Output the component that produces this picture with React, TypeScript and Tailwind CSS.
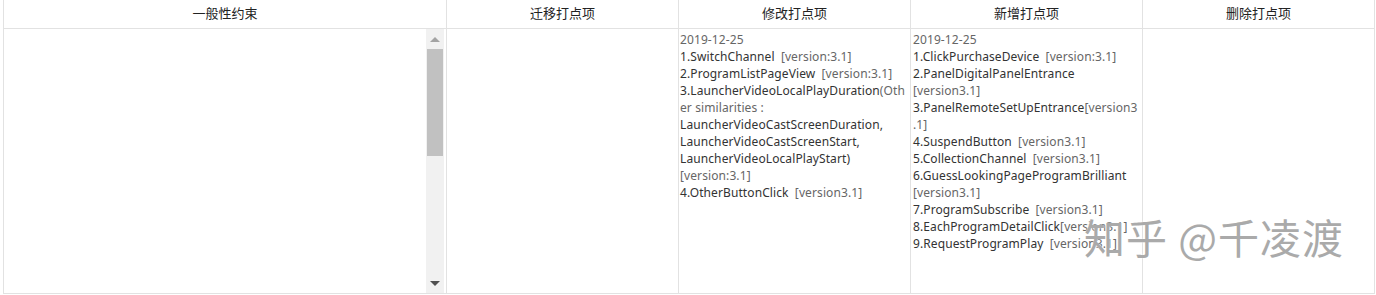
import React from "react";

const N = ({ children }: { children: React.ReactNode }) => (
  <span className="text-[#333]">{children}</span>
);
const G = () => <span className="[word-spacing:3px]"> </span>;

export default function App() {
  const font = { fontFamily: '"Noto Sans", "Noto Sans CJK SC", sans-serif' };
  return (
    <div className="w-[1376px] h-[295px] bg-white overflow-hidden relative" style={font}>
      <div className="ml-[3px] w-[1372px] border-l border-r border-b border-[#e2e2e2] grid grid-cols-[442px_232px_232px_232px_232px]">
        {["一般性约束", "迁移打点项", "修改打点项", "新增打点项", "删除打点项"].map((h, i) => (
          <div
            key={h}
            className={`h-[29px] border-b border-[#e2e2e2] flex items-center justify-center text-[13px] text-[#222] ${i > 0 ? "border-l" : ""}`}
          >
            {h}
          </div>
        ))}
        <div className="h-[264px] flex justify-end">
          <div className="w-[18px] mr-[2px] bg-[#f1f1f1] flex flex-col items-center">
            <div className="h-[20px] flex items-center justify-center">
              <div className="w-0 h-0 border-l-[5px] border-r-[5px] border-b-[5px] border-l-transparent border-r-transparent border-b-[#a3a3a3]" />
            </div>
            <div className="w-[16px] h-[107px] bg-[#c1c1c1]" />
            <div className="flex-1" />
            <div className="h-[20px] flex items-center justify-center">
              <div className="w-0 h-0 border-l-[5px] border-r-[5px] border-t-[5px] border-l-transparent border-r-transparent border-t-[#505050]" />
            </div>
          </div>
        </div>
        <div className="border-l border-[#e2e2e2]" />
        <div className="border-l border-[#e2e2e2] pl-[1px] pt-[2px] text-[12px] leading-[17px] tracking-[0.1px] text-[#666] whitespace-nowrap">
          <div>2019-12-25</div>
          <div><N>1.SwitchChannel</N><G />[version:3.1]</div>
          <div><N>2.ProgramListPageView</N><G />[version:3.1]</div>
          <div><N>3.LauncherVideoLocalPlayDuration</N>(Oth</div>
          <div>er similarities :</div>
          <div><N>LauncherVideoCastScreenDuration,</N></div>
          <div><N>LauncherVideoCastScreenStart,</N></div>
          <div><N>LauncherVideoLocalPlayStart)</N></div>
          <div>[version:3.1]</div>
          <div><N>4.OtherButtonClick</N><G />[version3.1]</div>
        </div>
        <div className="border-l border-[#e2e2e2] pl-[2px] pt-[2px] text-[12px] leading-[17px] tracking-[0.1px] text-[#666] whitespace-nowrap">
          <div>2019-12-25</div>
          <div><N>1.ClickPurchaseDevice</N><G />[version:3.1]</div>
          <div><N>2.PanelDigitalPanelEntrance</N></div>
          <div>[version3.1]</div>
          <div><N>3.PanelRemoteSetUpEntrance</N>[version3</div>
          <div>.1]</div>
          <div><N>4.SuspendButton</N><G />[version3.1]</div>
          <div><N>5.CollectionChannel</N><G />[version3.1]</div>
          <div><N>6.GuessLookingPageProgramBrilliant</N></div>
          <div>[version3.1]</div>
          <div><N>7.ProgramSubscribe</N><G />[version3.1]</div>
          <div><N>8.EachProgramDetailClick</N>[version3.1]</div>
          <div><N>9.RequestProgramPlay</N><G />[version3.1]</div>
        </div>
        <div className="border-l border-[#e2e2e2]" />
      </div>
      <div
        className="absolute left-[1084px] top-[210px] text-[41px] leading-[52px] text-[#aaa] tracking-[1px] [text-shadow:0_0_2px_#fff]"
        style={{ fontFamily: '"Noto Sans CJK SC", sans-serif' }}
      >
        知乎 @千凌渡
      </div>
    </div>
  );
}
